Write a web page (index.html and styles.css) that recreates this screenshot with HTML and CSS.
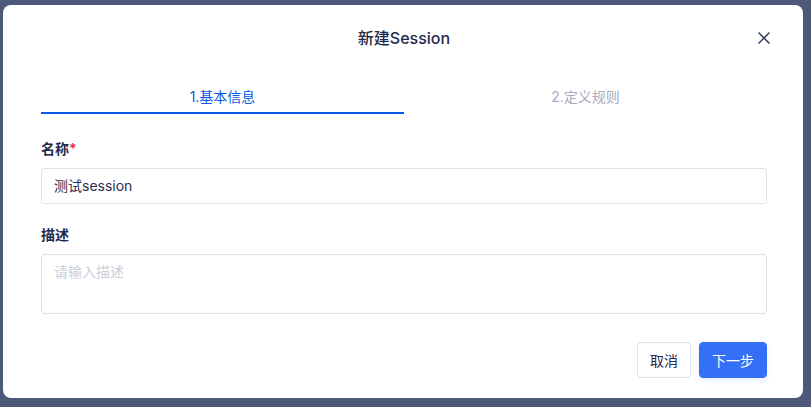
FILE: index.html
```html
<!DOCTYPE html>
<html lang="zh">
<head>
<meta charset="utf-8">
<link rel="stylesheet" href="styles.css">
</head>
<body>
<div class="modal">
  <div class="header">
    <span></span>
    <h1 class="title">新建Session</h1>
    <button class="close" aria-label="关闭">
      <svg width="14" height="14" viewBox="0 0 14 14"><path d="M1.5 1.5L12.5 12.5M12.5 1.5L1.5 12.5" stroke="#2b3456" stroke-width="1.4" fill="none"/></svg>
    </button>
  </div>
  <div class="tabs">
    <div class="tab active">1.基本信息</div>
    <div class="tab">2.定义规则</div>
  </div>
  <div class="field">
    <label class="label">名称<span class="req">*</span></label>
    <div class="input">测试session</div>
  </div>
  <div class="field second">
    <label class="label">描述</label>
    <div class="textarea">请输入描述</div>
  </div>
  <div class="footer">
    <button class="btn">取消</button>
    <button class="btn primary">下一步</button>
  </div>
</div>
</body>
</html>
```
FILE: styles.css
```css
* { box-sizing: border-box; }
html, body { margin: 0; padding: 0; }
body {
  background: #4e5878;
  font-family: "Inter", "Noto Sans CJK SC", sans-serif;
  width: 811px;
  height: 407px;
  overflow: hidden;
}
.modal {
  margin: 5px 0 0 3px;
  width: 800px;
  height: 393px;
  background: #fff;
  border-radius: 8px;
  padding: 0 36px 0 38px;
  display: flex;
  flex-direction: column;
}
.header {
  display: grid;
  grid-template-columns: 1fr auto 1fr;
  align-items: center;
  padding-top: 21px;
  height: 45px;
}
.title {
  margin: 0;
  font-size: 16px;
  line-height: 24px;
  font-weight: 500;
  color: #1f2a4d;
}
.close {
  justify-self: end;
  margin-right: -7px;
  width: 20px;
  height: 20px;
  padding: 0;
  border: 0;
  background: none;
  display: flex;
  align-items: center;
  justify-content: center;
}
.tabs {
  display: flex;
  margin-top: 31px;
}
.tab {
  flex: 1;
  text-align: center;
  font-size: 14px;
  line-height: 22px;
  padding: 5px 0 4px;
  color: #a6abbd;
  border-bottom: 2px solid transparent;
}
.tab.active {
  color: #0a59e8;
  border-bottom-color: #0a59e8;
}
.field {
  display: flex;
  flex-direction: column;
  margin-top: 24px;
}
.field.second { margin-top: 20px; }
.label {
  font-size: 14px;
  line-height: 22px;
  font-weight: 600;
  color: #1f2a4d;
  margin-bottom: 8px;
}
.req { color: #e5304a; }
.input {
  height: 36px;
  border: 1px solid #dde1ea;
  border-radius: 4px;
  padding: 0 12px;
  font-size: 14px;
  line-height: 34px;
  color: #2a3050;
}
.textarea {
  height: 60px;
  border: 1px solid #dde1ea;
  border-radius: 4px;
  padding: 6px 12px;
  font-size: 14px;
  line-height: 22px;
  color: #c9cedb;
}
.footer {
  display: flex;
  justify-content: flex-end;
  gap: 8px;
  margin-top: 28px;
}
.btn {
  height: 36px;
  padding: 0 12px;
  border: 1px solid #dde1ea;
  border-radius: 4px;
  background: #fff;
  font-family: inherit;
  font-size: 14px;
  color: #1f2a4d;
}
.btn.primary {
  background: #3370f6;
  border-color: #3370f6;
  color: #fff;
  padding: 0 12px;
  box-shadow: 0 2px 6px rgba(51, 112, 246, 0.12);
}
```
